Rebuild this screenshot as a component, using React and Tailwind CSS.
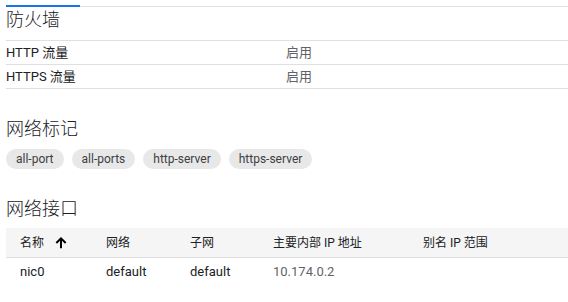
import React from "react";

const FONT = { fontFamily: 'Roboto, "Noto Sans CJK SC", "Noto Sans", sans-serif' };

function Heading({ children, className = "" }) {
  return (
    <div className={"text-[18px] leading-[24px] font-light text-[#202124] " + className}>{children}</div>
  );
}

function ArrowUp() {
  return (
    <svg viewBox="0 0 24 24" className="w-4 h-4 ml-[9px]" fill="none" stroke="#000" strokeWidth="3" strokeLinecap="butt" strokeLinejoin="miter">
      <path d="M12 20V5.5" />
      <path d="M5 12l7-7 7 7" />
    </svg>
  );
}

export default function App() {
  const tags = ["all-port", "all-ports", "http-server", "https-server"];
  return (
    <div className="w-[568px] h-[302px] overflow-hidden bg-white pl-[6px]" style={FONT}>
      <div className="flex pt-[5px]">
        <div className="w-[74px] h-[2px] bg-[#1a73e8]" />
        <div className="flex-1 h-[2px] border-b border-[#e0e0e0]" />
      </div>
      <Heading className="pt-[1px] h-[33px]">防火墙</Heading>
      <div className="border-t border-[#e0e0e0] text-[13px]">
        <div className="flex items-center h-[24px] border-b border-[#e0e0e0]">
          <div className="w-[280px] text-[#202124]">HTTP 流量</div>
          <div className="text-[#5f6368]">启用</div>
        </div>
        <div className="flex items-center h-[24px] border-b border-[#e0e0e0]">
          <div className="w-[280px] text-[#202124]">HTTPS 流量</div>
          <div className="text-[#5f6368]">启用</div>
        </div>
      </div>
      <Heading className="mt-[28px]">网络标记</Heading>
      <div className="flex gap-[8px] mt-[8px]">
        {tags.map((t) => (
          <div
            key={t}
            className="h-[20px] px-[10px] rounded-full bg-[#e8e8e8] text-[12px] text-[#3c4043] flex items-center"
          >
            {t}
          </div>
        ))}
      </div>
      <Heading className="mt-[28px]">网络接口</Heading>
      <div className="mt-[7px]">
        <div className="flex items-center h-[30px] bg-[#f5f5f5] border-b border-[#e0e0e0] text-[12px] text-[#202124]">
          <div className="w-[86px] pl-[14px] flex items-center">
            名称
            <ArrowUp />
          </div>
          <div className="w-[84px] pl-[14px]">网络</div>
          <div className="w-[83px] pl-[14px]">子网</div>
          <div className="w-[150px] pl-[14px]">主要内部 IP 地址</div>
          <div className="flex-1 pl-[14px]">别名 IP 范围</div>
        </div>
        <div className="flex items-center h-[28px] text-[13px] text-[#202124]">
          <div className="w-[86px] pl-[14px]">nic0</div>
          <div className="w-[84px] pl-[14px]">default</div>
          <div className="w-[83px] pl-[14px]">default</div>
          <div className="w-[150px] pl-[14px] text-[#5f6368]">10.174.0.2</div>
          <div className="flex-1 pl-[14px]"></div>
        </div>
      </div>
    </div>
  );
}
